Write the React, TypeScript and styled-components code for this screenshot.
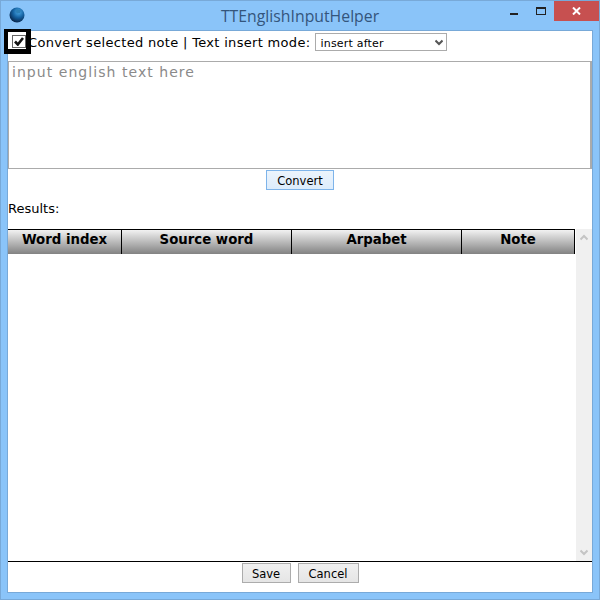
import styled, { createGlobalStyle } from "styled-components";

const uiFont = `"DejaVu Sans", "Noto Sans CJK JP", sans-serif`;

const columns = ["Word index", "Source word", "Arpabet", "Note"];

const GlobalStyle = createGlobalStyle`
  html, body {
    margin: 0;
    padding: 0;
    background: #8ac4f9;
  }
`;

const Frame = styled.div`
  width: 600px;
  height: 600px;
  box-sizing: border-box;
  display: flex;
  flex-direction: column;
  background: #8ac4f9;
  border: 1px solid #78a9d8;
  padding: 0 6px 6px 6px;
  font-family: ${uiFont};
  color: #000;
`;

const TitleBar = styled.div`
  height: 29px;
  flex: none;
  display: grid;
  grid-template-columns: 1fr auto 1fr;
  align-items: start;
`;

const AppIcon = styled.svg`
  width: 16px;
  height: 16px;
  margin: 6px 0 0 2px;
  display: block;
`;

const Title = styled.div`
  font-family: "Open Sans", sans-serif;
  font-size: 15.8px;
  line-height: 20px;
  margin-top: 5px;
  color: #34557c;
`;

const Controls = styled.div`
  display: flex;
  justify-content: flex-end;
  align-items: flex-start;
  margin-right: -6px;
`;

const MinButton = styled.div`
  width: 8px;
  height: 2px;
  background: #222;
  margin: 12px 18px 0 0;
`;

const MaxButton = styled.div`
  width: 10px;
  height: 8px;
  box-sizing: border-box;
  border: 1px solid #222;
  border-top-width: 2px;
  margin: 6px 8px 0 0;
`;

const CloseButton = styled.div`
  width: 45px;
  height: 20px;
  background: #c75050;
  display: flex;
  align-items: center;
  justify-content: center;
`;

const Client = styled.div`
  flex: 1;
  min-height: 0;
  display: flex;
  flex-direction: column;
  background: #fff;
  border: 1px solid #78a9d8;
`;

const OptionsRow = styled.div`
  height: 22px;
  flex: none;
  display: flex;
  align-items: center;
  font-size: 13px;
  letter-spacing: 0.32px;
  white-space: nowrap;
`;

const CheckWrap = styled.span`
  position: relative;
  flex: none;
  width: 14px;
  height: 13px;
  margin: 0 2px 2px 4px;
`;

const CheckBox = styled.span`
  display: flex;
  align-items: center;
  justify-content: center;
  width: 14px;
  height: 13px;
  box-sizing: border-box;
  border: 1px solid #666;
  background: #fff;
`;

/* black annotation drawn over the checkbox */
const Highlight = styled.span`
  position: absolute;
  left: -8px;
  top: -6px;
  width: 27px;
  height: 25px;
  box-sizing: border-box;
  border-style: solid;
  border-color: #000;
  border-width: 3px 5px 5px 4px;
`;

const ModeSelect = styled.div`
  position: relative;
  width: 132px;
  height: 18px;
  margin-left: 5px;
  flex: none;
`;

const NativeSelect = styled.select`
  appearance: none;
  display: block;
  width: 100%;
  height: 100%;
  box-sizing: border-box;
  border: 1px solid #ababab;
  border-radius: 0;
  background: #fff;
  padding: 2px 0 0 4px;
  font-family: ${uiFont};
  font-size: 11px;
  letter-spacing: 0.2px;
  color: #000;
`;

const SelectArrow = styled.svg`
  position: absolute;
  right: 4px;
  top: 6px;
  width: 8px;
  height: 7px;
  pointer-events: none;
`;

const InputArea = styled.textarea`
  display: block;
  flex: none;
  height: 108px;
  margin-top: 8px;
  box-sizing: border-box;
  border: 1px solid #ababab;
  border-right-width: 2px;
  padding: 0 3px;
  resize: none;
  outline: none;
  font-family: ${uiFont};
  font-size: 14px;
  letter-spacing: 1.05px;
  line-height: 20px;

  &::placeholder {
    color: #8a8a8a;
    opacity: 1;
  }
`;

const ConvertRow = styled.div`
  display: flex;
  justify-content: center;
  margin-top: 1px;
  flex: none;
`;

const Button = styled.button<{ $primary?: boolean; $width: number }>`
  width: ${(p) => p.$width}px;
  height: 20px;
  box-sizing: border-box;
  padding: 1px 0 0;
  border-radius: 0;
  border: ${(p) => (p.$primary ? "1px solid #7eb4ea" : "1px solid #acacac")};
  background: ${(p) =>
    p.$primary
      ? "linear-gradient(#ecf4fc, #dcecfc)"
      : "linear-gradient(#f0f0f0, #e5e5e5)"};
  font-family: ${uiFont};
  font-size: 11.5px;
  color: #000;
`;

const ResultsLabel = styled.div`
  flex: none;
  height: 16px;
  margin-top: 11px;
  font-size: 13px;
  line-height: 16px;
`;

const ResultsPanel = styled.div`
  flex: 1;
  min-height: 0;
  margin-top: 12px;
  display: flex;
  border-bottom: 1px solid #000;
`;

const Table = styled.div`
  flex: 1;
  min-width: 0;
`;

const HeaderRow = styled.div`
  display: grid;
  grid-template-columns: 114px 170px 170px 113px;
  width: 567px;
  height: 25px;
  box-sizing: border-box;
  border-top: 1px solid #000;
  background: linear-gradient(#f2f2f2, #828282);
`;

const HeaderCell = styled.div`
  box-sizing: border-box;
  border-right: 1px solid #000;
  text-align: center;
  font-size: 13.3px;
  font-weight: 700;
  line-height: 20px;
`;

const Scrollbar = styled.div`
  flex: none;
  width: 16px;
  background: #f0f0f0;
  display: flex;
  flex-direction: column;
  justify-content: space-between;
  align-items: center;
  padding: 5px 0;
`;

const ScrollArrow = styled.svg`
  width: 8px;
  height: 7px;
  display: block;
`;

const Footer = styled.div`
  flex: none;
  height: 30px;
  padding-top: 1px;
  box-sizing: border-box;
  display: flex;
  justify-content: center;
  gap: 7px;
`;

const Chevron = ({ color }: { color: string }) => (
  <path d="M0.5 1.5 L4 5 L7.5 1.5" fill="none" stroke={color} strokeWidth="2" />
);

export default function App() {
  return (
    <>
      <GlobalStyle />
      <Frame>
        <TitleBar>
          <AppIcon viewBox="0 0 16 16">
            <defs>
              <radialGradient id="globe" cx="0.6" cy="0.3" r="0.75">
                <stop offset="0" stopColor="#4aa8e8" />
                <stop offset="0.5" stopColor="#14609f" />
                <stop offset="1" stopColor="#071f42" />
              </radialGradient>
            </defs>
            <circle cx="8" cy="8" r="7.5" fill="url(#globe)" />
            <path d="M8 2 L12 3.5 L11 6 L8 6.5 L6.5 4.5 Z" fill="#2d7fb5" />
          </AppIcon>
          <Title>TTEnglishInputHelper</Title>
          <Controls>
            <MinButton />
            <MaxButton />
            <CloseButton>
              <svg width="9" height="8" viewBox="0 0 9 8">
                <path d="M1 0.5 L8 7.5 M8 0.5 L1 7.5" stroke="#fff" strokeWidth="2" />
              </svg>
            </CloseButton>
          </Controls>
        </TitleBar>
        <Client>
          <OptionsRow>
            <CheckWrap>
              <CheckBox>
                <svg width="10" height="9" viewBox="0 0 10 9">
                  <path d="M1 4.5 L3.8 7.5 L9 1" fill="none" stroke="#111" strokeWidth="2.6" />
                </svg>
              </CheckBox>
              <Highlight />
            </CheckWrap>
            <span>Convert selected note | Text insert mode:</span>
            <ModeSelect>
              <NativeSelect defaultValue="insert after">
                <option>insert after</option>
              </NativeSelect>
              <SelectArrow viewBox="0 0 8 7">
                <Chevron color="#555" />
              </SelectArrow>
            </ModeSelect>
          </OptionsRow>
          <InputArea placeholder="input english text here" />
          <ConvertRow>
            <Button $primary $width={68}>Convert</Button>
          </ConvertRow>
          <ResultsLabel>Results:</ResultsLabel>
          <ResultsPanel>
            <Table>
              <HeaderRow>
                {columns.map((name) => (
                  <HeaderCell key={name}>{name}</HeaderCell>
                ))}
              </HeaderRow>
            </Table>
            <Scrollbar>
              <ScrollArrow viewBox="0 0 8 7">
                <path d="M0.5 5.5 L4 2 L7.5 5.5" fill="none" stroke="#c4c4c4" strokeWidth="2" />
              </ScrollArrow>
              <ScrollArrow viewBox="0 0 8 7">
                <Chevron color="#c4c4c4" />
              </ScrollArrow>
            </Scrollbar>
          </ResultsPanel>
          <Footer>
            <Button $width={49}>Save</Button>
            <Button $width={61}>Cancel</Button>
          </Footer>
        </Client>
      </Frame>
    </>
  );
}
